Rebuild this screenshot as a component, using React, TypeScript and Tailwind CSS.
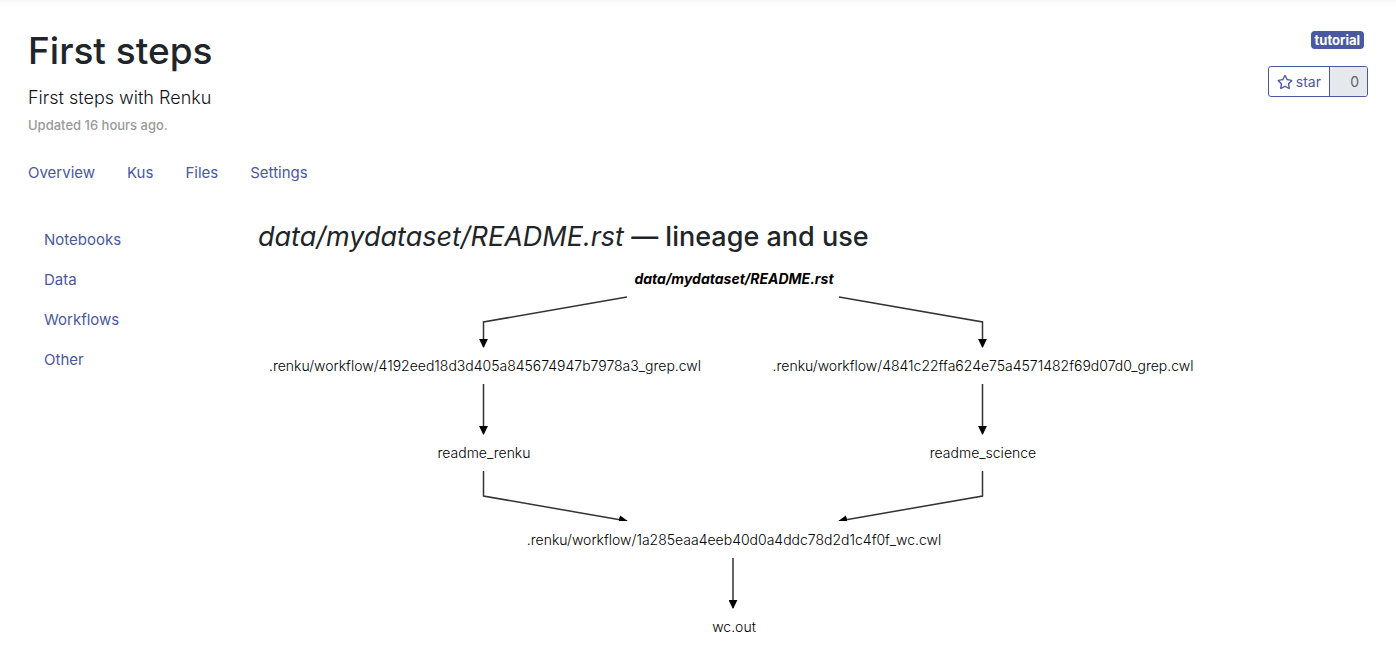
import React from "react";

type GraphNode = { label: string; x: number; y: number; current?: boolean };

const tabs = ["Overview", "Kus", "Files", "Settings"];
const sections = ["Notebooks", "Data", "Workflows", "Other"];

const nodes: GraphNode[] = [
  { label: "data/mydataset/README.rst", x: 476, y: 24, current: true },
  { label: ".renku/workflow/4192eed18d3d405a845674947b7978a3_grep.cwl", x: 227, y: 111 },
  { label: ".renku/workflow/4841c22ffa624e75a4571482f69d07d0_grep.cwl", x: 725, y: 111 },
  { label: "readme_renku", x: 226, y: 198 },
  { label: "readme_science", x: 725, y: 198 },
  { label: ".renku/workflow/1a285eaa4eeb40d0a4ddc78d2d1c4f0f_wc.cwl", x: 476, y: 285 },
  { label: "wc.out", x: 476, y: 372 },
];

const edges = [
  "M369 37L225.5 62V87",
  "M581 37L724.5 62V87",
  "M225.5 124V174",
  "M724.5 124V174",
  "M225.5 211V236L369 261",
  "M724.5 211V236L581 261",
  "M475 298V348",
];

function LineageGraph() {
  return (
    <svg width="952" height="391" viewBox="0 0 952 391" role="img" aria-label="File lineage" className="block max-w-full">
      <defs>
        <marker id="arrow" viewBox="0 0 10 10" refX="9" refY="5" markerUnits="strokeWidth" markerWidth="6" markerHeight="6" orient="auto">
          <path d="M0 0L10 5L0 10Z" />
        </marker>
        <clipPath id="edge-area">
          <path d="M0 36H952V88H0ZM0 123H952V175H0ZM0 210H952V261H0ZM0 297H952V349H0Z" />
        </clipPath>
      </defs>
      <g clipPath="url(#edge-area)">
        {edges.map((d) => (
          <path key={d} d={d} fill="none" stroke="#333" strokeWidth="1.5" markerEnd="url(#arrow)" />
        ))}
      </g>
      {nodes.map((n) => (
        <text
          key={n.label}
          x={n.x}
          y={n.y}
          textAnchor="middle"
          className={n.current ? "fill-black text-[14px] font-bold italic" : "fill-black text-[14px] font-light"}
        >
          {n.label}
        </text>
      ))}
    </svg>
  );
}

function StarButton() {
  return (
    <div className="flex h-[31px] overflow-hidden rounded-[3px] border border-[#4a58a0] text-[14px]">
      <button type="button" className="flex items-center gap-[3px] px-2 text-[#4a58a0]">
        <svg width="16" height="16" viewBox="0 0 576 512" fill="currentColor" aria-hidden="true">
          <path d="M528.1 171.5L382 150.2 316.7 17.8c-11.7-23.6-45.6-23.9-57.4 0L194 150.2 47.9 171.5c-26.2 3.8-36.7 36.1-17.7 54.6l105.7 103-25 145.5c-4.5 26.3 23.2 46 46.4 33.7L288 439.6l130.7 68.7c23.2 12.2 50.9-7.4 46.4-33.7l-25-145.5 105.7-103c19-18.5 8.5-50.8-17.7-54.6zM388.6 312.3l23.7 138.4L288 385.4l-124.3 65.3 23.7-138.4-100.6-98 139-20.2 62.2-126 62.2 126 139 20.2-100.6 98z" />
        </svg>
        star
      </button>
      <span className="flex w-[38px] items-center justify-end border-l border-[#4a58a0] bg-[#e5e9ed] pr-2 text-[#5b6167]">0</span>
    </div>
  );
}

export default function App() {
  return (
    <div className="min-h-screen border-t-2 border-[#f8f8f8] bg-white px-7 font-['Inter',sans-serif] text-[#212529]">
      <header className="flex items-start justify-between pt-[25px]">
        <div>
          <h1 className="text-[37px] leading-[48px] font-medium">First steps</h1>
          <p className="mt-2 text-[18px] leading-[30px] font-light text-[#111418]">First steps with Renku</p>
          <p className="mt-[2px] text-[13px] leading-[21px] font-medium text-[#999]">Updated 16 hours ago.</p>
        </div>
        <div className="flex flex-col items-end pt-1">
          <span className="mr-1 rounded bg-[#4a58a0] px-1 text-[13px] leading-[18px] font-bold text-white">tutorial</span>
          <div className="mt-[17px]">
            <StarButton />
          </div>
        </div>
      </header>
      <nav className="mt-[25px] flex gap-8 text-[15px] leading-6 text-[#4a58a0]">
        {tabs.map((t) => (
          <a key={t} href={"#" + t.toLowerCase()}>{t}</a>
        ))}
      </nav>
      <div className="mt-[35px] flex">
        <nav className="flex w-[230px] shrink-0 flex-col gap-4 px-4 pt-2 text-[15px] leading-6 text-[#4a58a0]">
          {sections.map((s) => (
            <a key={s} href={"#" + s.toLowerCase()}>{s}</a>
          ))}
        </nav>
        <main className="min-w-0 grow">
          <h2 className="text-[27px] leading-[34px] font-medium">
            <em className="font-normal">data/mydataset/README.rst</em> — lineage and use
          </h2>
          <div className="mt-[6px]">
            <LineageGraph />
          </div>
        </main>
      </div>
    </div>
  );
}
